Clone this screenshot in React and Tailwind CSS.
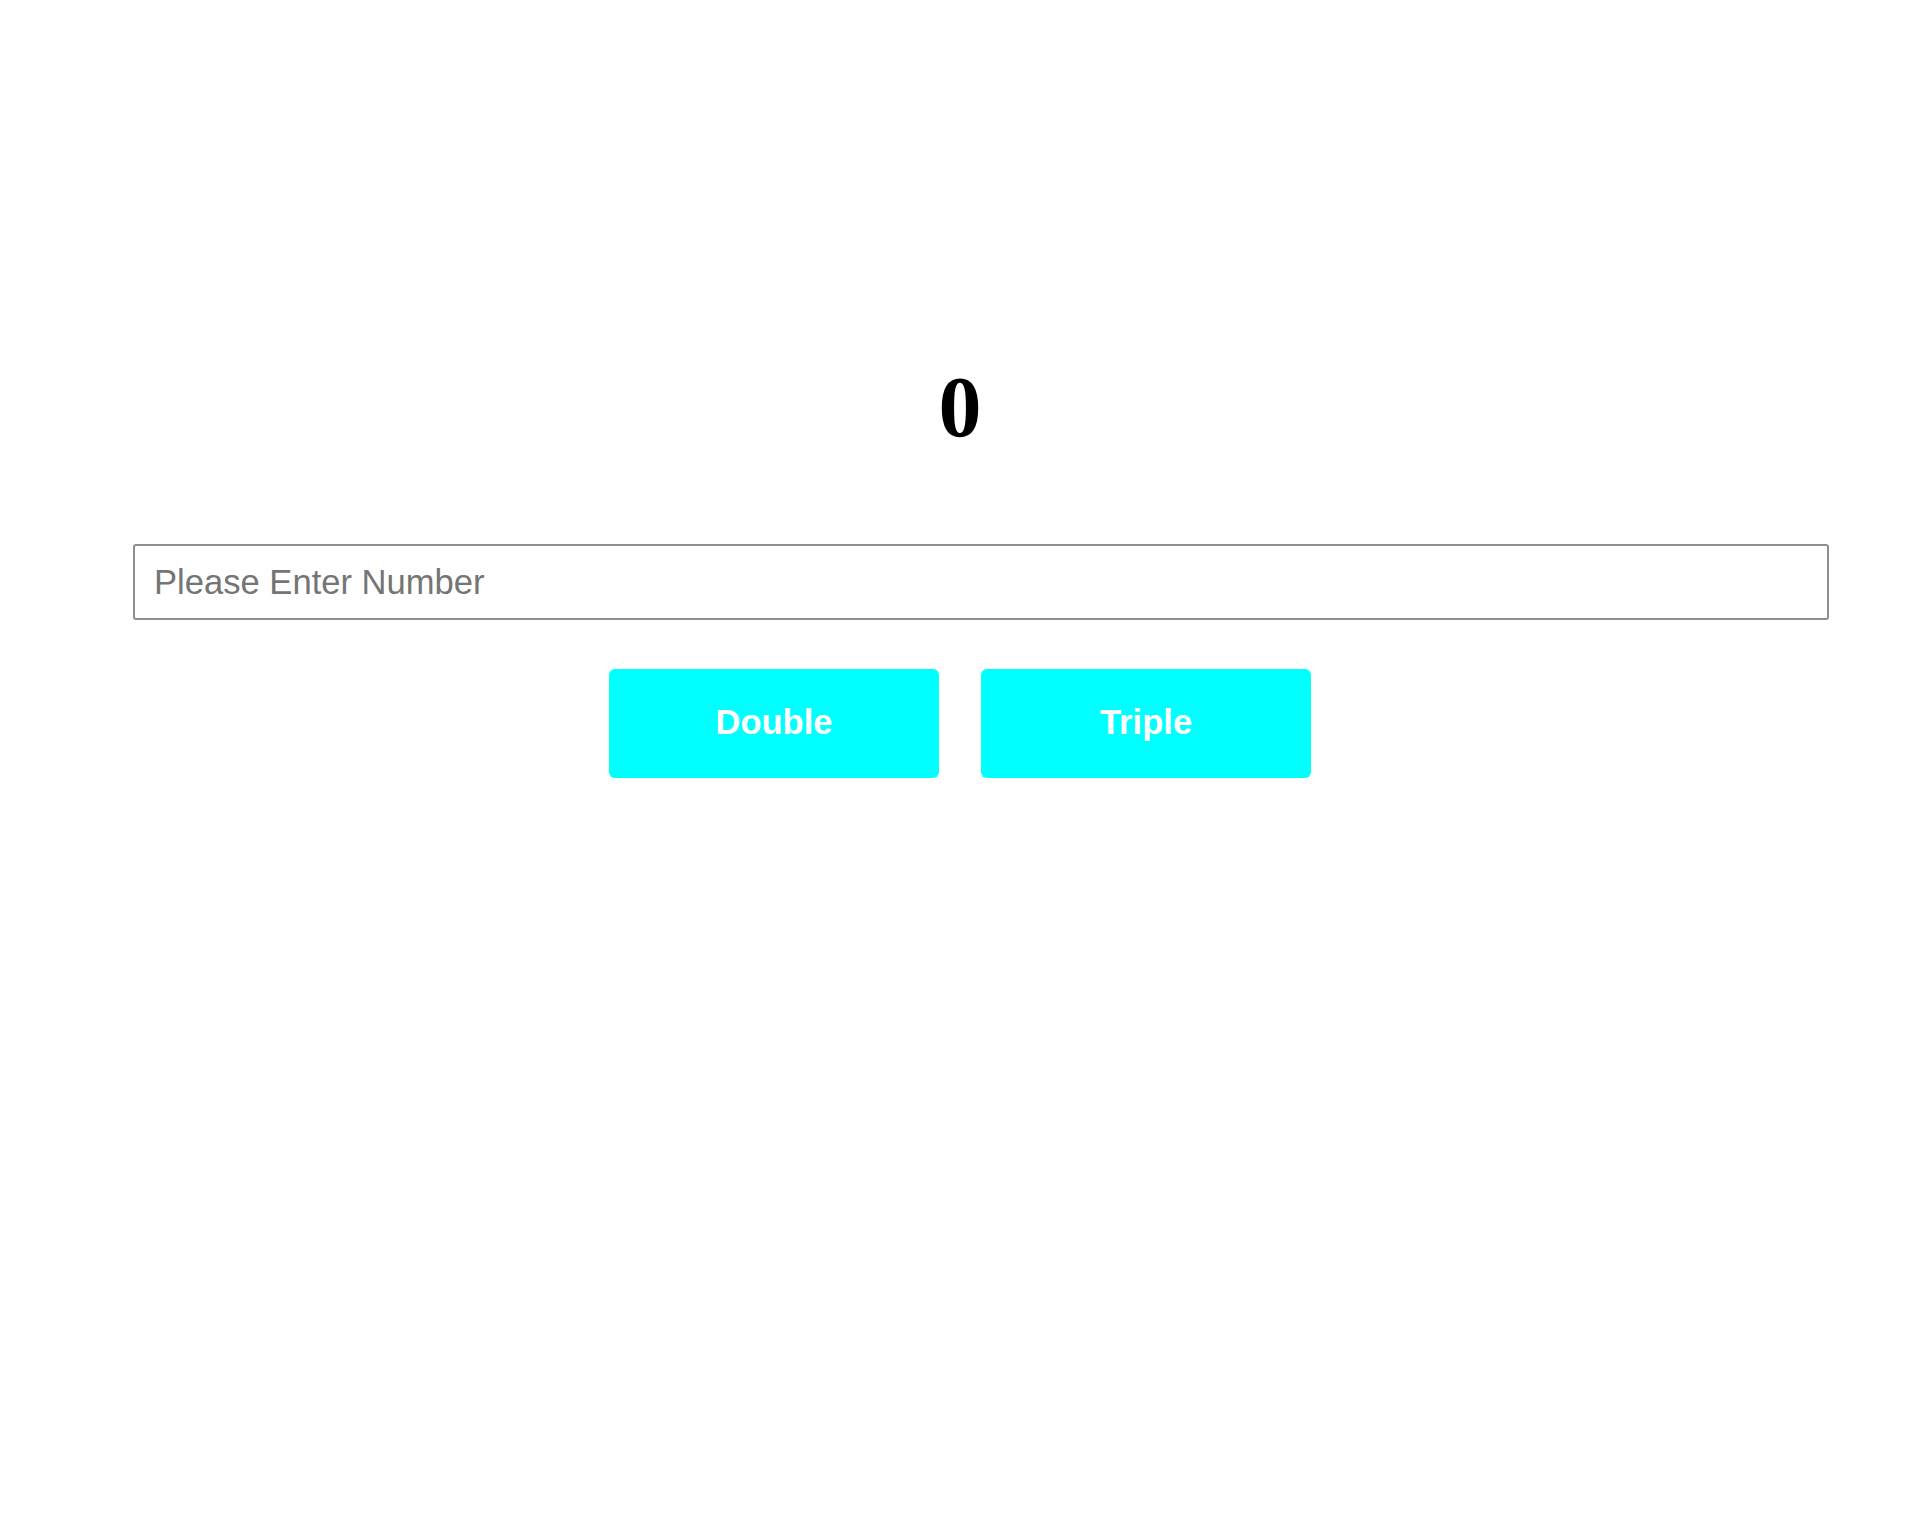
import React, { useState } from 'react';

export default function App() {
  const [valor, setValor] = useState(0);
  const [entrada, setEntrada] = useState('');

  const aplicar = (fator) => {
    const n = Number(entrada);
    if (!Number.isNaN(n)) setValor(n * fator);
  };

  return (
    <div className="min-h-[1520px] bg-white pt-[364px]">
      <h1 className="text-center text-[86px] leading-none font-bold text-black font-['Liberation_Serif','Times_New_Roman',serif]">
        {valor}
      </h1>

      <div className="mt-[94px] ml-[133px] w-[1696px]">
        <input
          type="text"
          value={entrada}
          onChange={(e) => setEntrada(e.target.value)}
          placeholder="Please Enter Number"
          className="box-border block h-[76px] w-full rounded-[3px] border-2 border-[#8f8f8f] bg-white pl-[19px] pr-[18px] text-[34.6px] text-black placeholder:text-[#757575] outline-none font-['Liberation_Sans',Arial,sans-serif]"
        />
      </div>

      <div className="mt-[49px] flex justify-center gap-[42px]">
        <button
          className="h-[109px] w-[330px] rounded-[6px] bg-[#00ffff] pb-[2px] text-[34.6px] font-bold text-white font-['Liberation_Sans',Arial,sans-serif]"
          onClick={() => aplicar(2)}
        >
          Double
        </button>
        <button
          className="h-[109px] w-[330px] rounded-[6px] bg-[#00ffff] pb-[2px] text-[34.6px] font-bold text-white font-['Liberation_Sans',Arial,sans-serif]"
          onClick={() => aplicar(3)}
        >
          Triple
        </button>
      </div>
    </div>
  );
}
